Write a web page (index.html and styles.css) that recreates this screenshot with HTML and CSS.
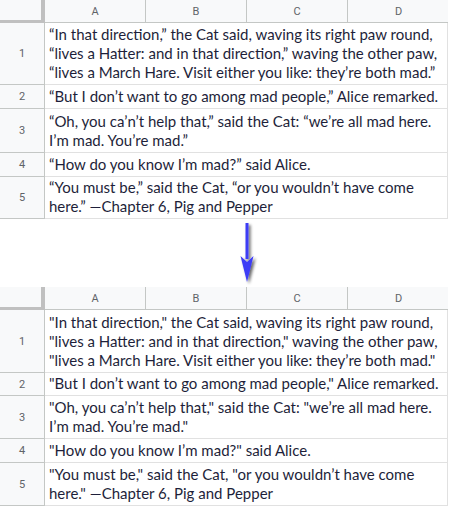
FILE: index.html
```html
<!DOCTYPE html>
<html>
<head>
<meta charset="utf-8">
<link rel="stylesheet" href="styles.css">
</head>
<body>
<div class="sheet">
  <div class="hdr">
    <div class="corner"></div>
    <div class="col">A</div><div class="col">B</div><div class="col">C</div><div class="col last">D</div>
  </div>
  <div class="row h62"><div class="num">1</div><div class="cell">“In that direction,” the Cat said, waving its right paw round,<br>“lives a Hatter: and in that direction,” waving the other paw,<br>“lives a March Hare. Visit either you like: they’re both mad.”</div></div>
  <div class="row h24"><div class="num">2</div><div class="cell">“But I don’t want to go among mad people,” Alice remarked.</div></div>
  <div class="row h44"><div class="num">3</div><div class="cell">“Oh, you ca’n’t help that,” said the Cat: “we’re all mad here.<br>I’m mad. You’re mad.”</div></div>
  <div class="row h24"><div class="num">4</div><div class="cell">“How do you know I’m mad?” said Alice.</div></div>
  <div class="row h42"><div class="num">5</div><div class="cell">“You must be,” said the Cat, “or you wouldn’t have come<br>here.” —Chapter 6, Pig and Pepper</div></div>
</div>
<div class="gap">
  <svg class="arrow" width="30" height="68" viewBox="0 0 30 68">
    <defs>
      <filter id="sh" x="-50%" y="-20%" width="200%" height="140%">
        <feGaussianBlur in="SourceAlpha" stdDeviation="1.6"/>
        <feOffset dx="2" dy="2" result="b"/>
        <feComponentTransfer><feFuncA type="linear" slope="0.6"/></feComponentTransfer>
        <feMerge><feMergeNode/><feMergeNode in="SourceGraphic"/></feMerge>
      </filter>
    </defs>
    <g filter="url(#sh)">
      <rect x="13.5" y="4" width="3" height="36" fill="#3c3cf6"/>
      <path d="M8.5 37 L15 43 L21.5 37 L15 63 Z" fill="#3c3cf6"/>
    </g>
  </svg>
</div>
<div class="sheet">
  <div class="hdr">
    <div class="corner"></div>
    <div class="col">A</div><div class="col">B</div><div class="col">C</div><div class="col last">D</div>
  </div>
  <div class="row h63"><div class="num">1</div><div class="cell">"In that direction," the Cat said, waving its right paw round,<br>"lives a Hatter: and in that direction," waving the other paw,<br>"lives a March Hare. Visit either you like: they’re both mad."</div></div>
  <div class="row h23"><div class="num">2</div><div class="cell">"But I don’t want to go among mad people," Alice remarked.</div></div>
  <div class="row h43"><div class="num">3</div><div class="cell">"Oh, you ca’n’t help that," said the Cat: "we’re all mad here.<br>I’m mad. You’re mad."</div></div>
  <div class="row h24"><div class="num">4</div><div class="cell">"How do you know I’m mad?" said Alice.</div></div>
  <div class="row h43"><div class="num">5</div><div class="cell">"You must be," said the Cat, "or you wouldn’t have come<br>here." —Chapter 6, Pig and Pepper</div></div>
</div>
</body>
</html>
```
FILE: styles.css
```css
html, body {
  margin: 0;
  padding: 0;
  background: #ffffff;
}
.sheet {
  width: 448px;
  display: flex;
  flex-direction: column;
}
.hdr {
  display: flex;
  height: 23px;
  box-sizing: border-box;
  background: #f8f9fa;
  border-bottom: 1px solid #c4c7c5;
}
.corner {
  width: 45px;
  box-sizing: border-box;
  border-right: 4px solid #c0c0c0;
  border-bottom: 3px solid #c0c0c0;
  margin-bottom: -1px;
  flex: none;
}
.col {
  width: 101px;
  flex: none;
  box-sizing: border-box;
  border-right: 1px solid #c4c7c5;
  display: flex;
  align-items: center;
  justify-content: center;
  font-family: Roboto, "Liberation Sans", sans-serif;
  font-size: 11px;
  color: #5f6368;
}
.col.last {
  width: 102px;
}
.row {
  display: flex;
  box-sizing: border-box;
}
.h62 { height: 62px; }
.h63 { height: 63px; }
.h24 { height: 24px; }
.h23 { height: 23px; }
.h44 { height: 44px; }
.h43 { height: 43px; }
.h42 { height: 42px; }
.num {
  width: 45px;
  flex: none;
  box-sizing: border-box;
  background: #f8f9fa;
  border-right: 1px solid #c4c7c5;
  border-bottom: 1px solid #c4c7c5;
  display: flex;
  align-items: center;
  justify-content: center;
  font-family: Roboto, "Liberation Sans", sans-serif;
  font-size: 11px;
  color: #5f6368;
}
.cell {
  flex: 1;
  box-sizing: border-box;
  border-right: 1px solid #e1e1e1;
  border-bottom: 1px solid #e1e1e1;
  padding: 0 0 2px 4px;
  display: flex;
  flex-direction: column;
  justify-content: flex-end;
  font-family: Lato, "Open Sans", sans-serif;
  font-size: 15px;
  line-height: 19px;
  color: #1e1f3a;
  white-space: nowrap;
  overflow: hidden;
}
.cell br { display: block; }
.gap {
  height: 68px;
  display: flex;
  justify-content: flex-start;
  padding-left: 232px;
}
.arrow {
  display: block;
}
```
